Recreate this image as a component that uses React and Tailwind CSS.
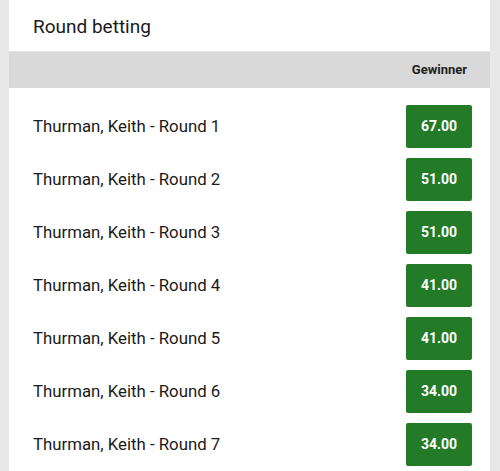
export default function App() {
    const rounds = [
        { label: 'Thurman, Keith - Round 1', odds: '67.00' },
        { label: 'Thurman, Keith - Round 2', odds: '51.00' },
        { label: 'Thurman, Keith - Round 3', odds: '51.00' },
        { label: 'Thurman, Keith - Round 4', odds: '41.00' },
        { label: 'Thurman, Keith - Round 5', odds: '41.00' },
        { label: 'Thurman, Keith - Round 6', odds: '34.00' },
        { label: 'Thurman, Keith - Round 7', odds: '34.00' },
    ];

    return (
        <div className="h-[471px] w-[500px] overflow-hidden bg-[#e8e8e8] pl-[9px] pr-[10px] font-['Roboto',sans-serif]">
            <div className="h-full bg-white">
                {/* Title */}
                <div className="flex h-[51px] items-center pl-[24px] pt-[4px] text-[19px] text-[#1a1a1a]">
                    Round betting
                </div>

                {/* Column header */}
                <div className="flex h-[37px] items-center justify-end border-t border-[#e6e6e6] bg-[#d9d9d9] pr-[23px] text-[13px] font-bold text-[#222]">
                    Gewinner
                </div>

                {/* Rows */}
                <div className="pt-[12px]">
                    {rounds.map((r) => (
                        <div key={r.label} className="flex h-[53px] items-center justify-between pl-[24px] pr-[18px]">
                            <span className="text-[16.8px] text-[#1a1a1a]">{r.label}</span>
                            <button className="flex h-[43px] w-[66px] items-center justify-center rounded-[2px] bg-[#237a27] text-[14px] font-bold text-white">
                                {r.odds}
                            </button>
                        </div>
                    ))}
                </div>
            </div>
        </div>
    );
}
